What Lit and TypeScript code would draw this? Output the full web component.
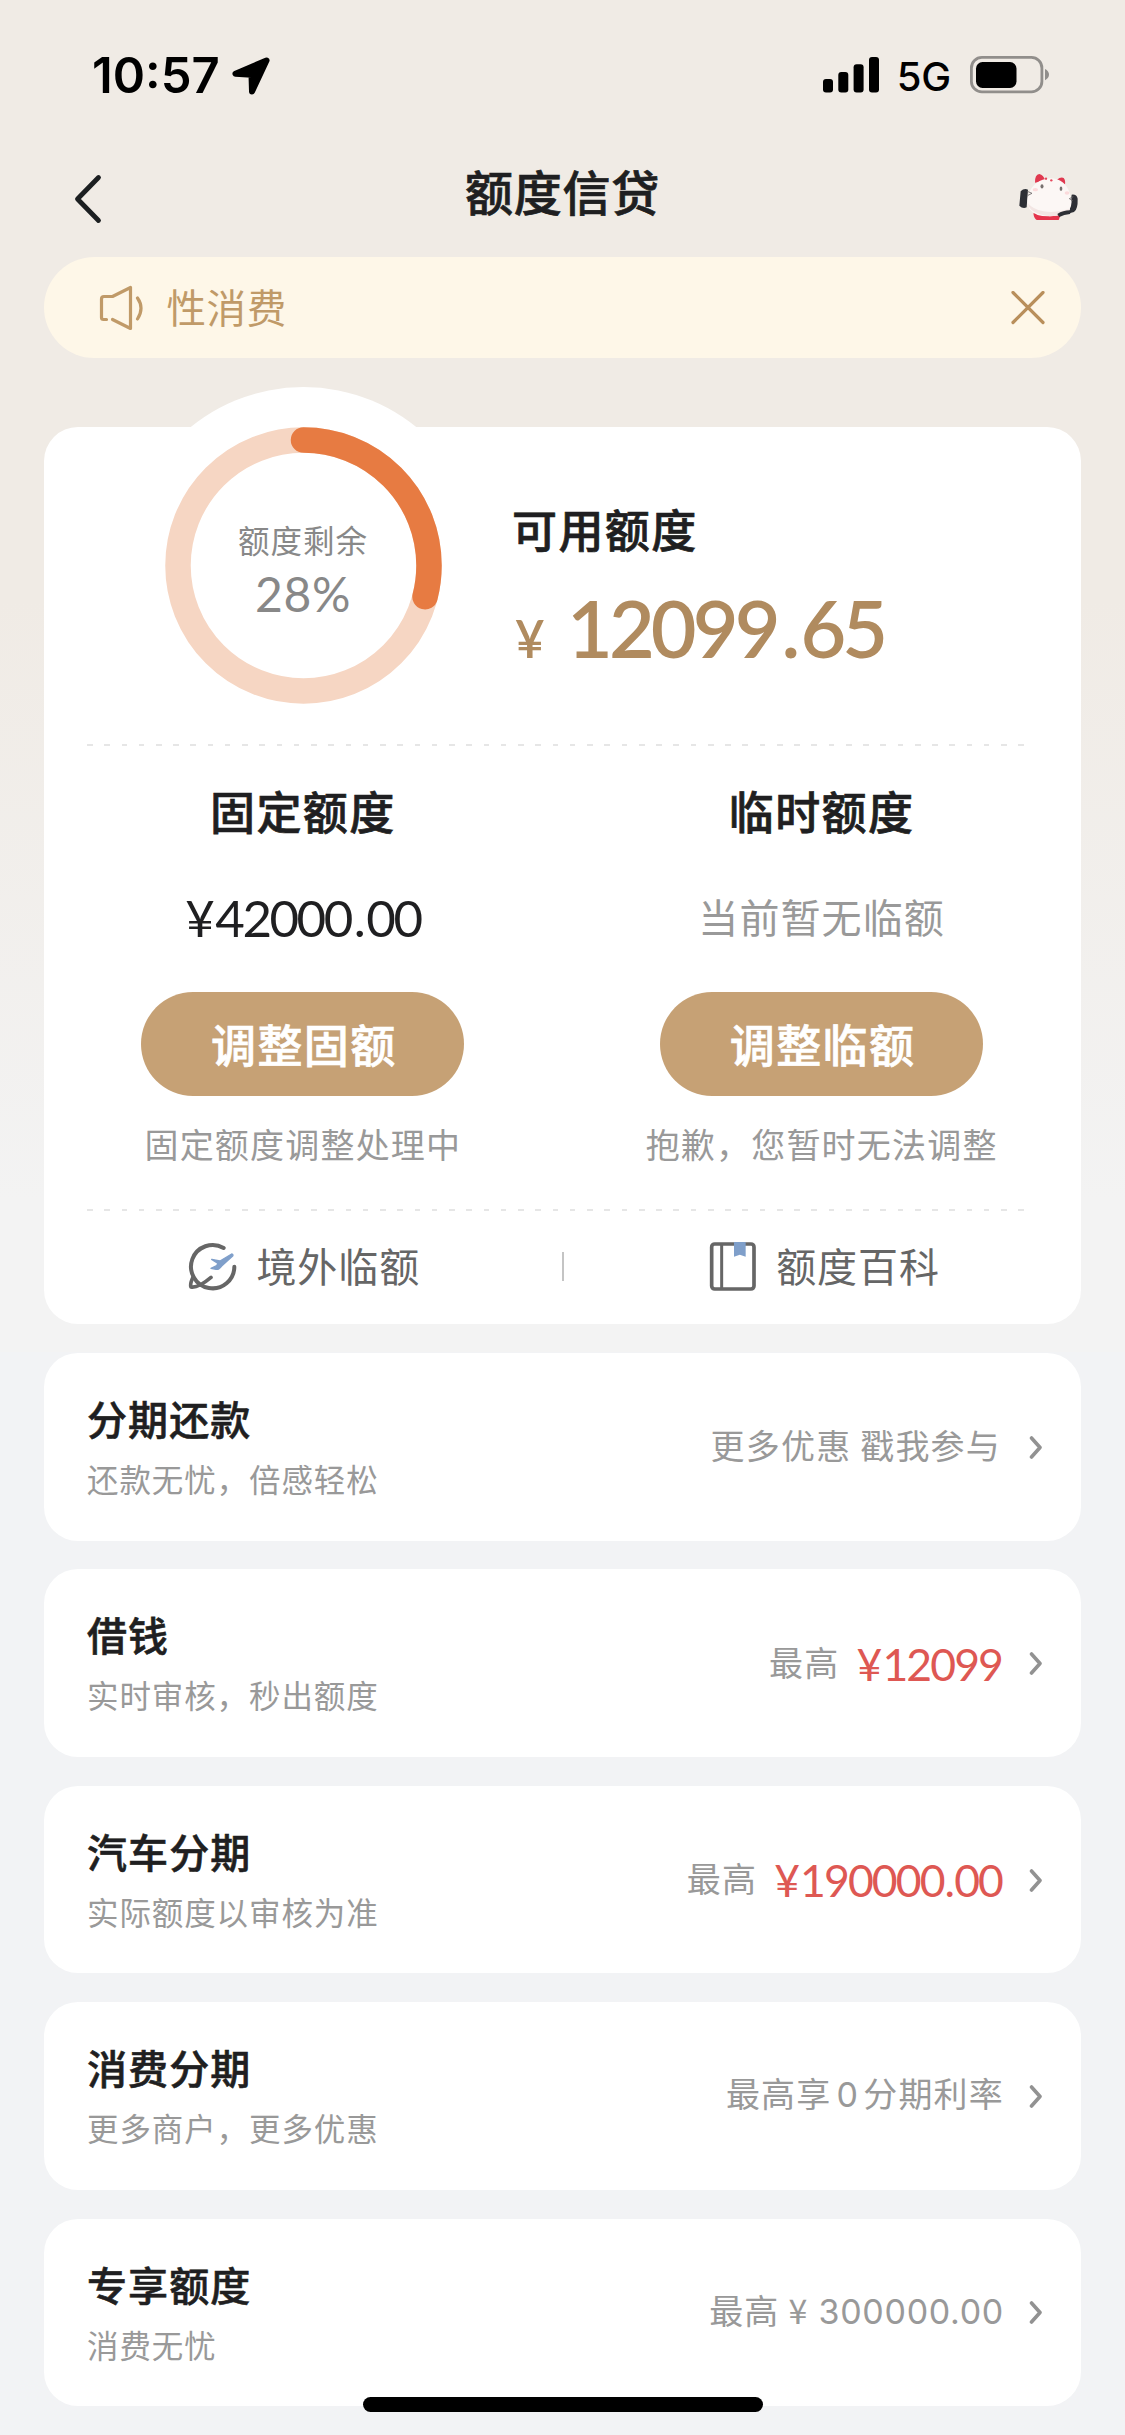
import { LitElement, html, css, nothing } from "lit";
import type { TemplateResult } from "lit";
import { customElement, property } from "lit/decorators.js";

interface Entry {
  title: string;
  sub: string;
  note: TemplateResult;
  amount?: string;
}

const ENTRIES: Entry[] = [
  { title: "分期还款", sub: "还款无忧，倍感轻松", note: html`<span class="shift">更多优惠 戳我参与</span>` },
  { title: "借钱", sub: "实时审核，秒出额度", note: html`最高`, amount: "¥12099" },
  { title: "汽车分期", sub: "实际额度以审核为准", note: html`最高`, amount: "¥190000.00" },
  { title: "消费分期", sub: "更多商户，更多优惠", note: html`最高享<span class="zero">0</span>分期利率` },
  { title: "专享额度", sub: "消费无忧", note: html`最高<span class="cny">¥</span> <span class="wide">300000.00</span>` },
];

// Gives the yen sign and the decimal point their own elements so they can be spaced more openly than the digits.
const money = (value: string) => {
  const sign = value.startsWith("¥");
  const [whole, cents] = (sign ? value.slice(1) : value).split(".");
  return html`${sign ? html`<span class="sign">¥</span>` : nothing}${whole}${cents === undefined ? nothing : html`<span class="dot">.</span>${cents}`}`;
};

@customElement("status-bar")
class StatusBar extends LitElement {
  static styles = css`
    :host {
      display: flex;
      justify-content: space-between;
      align-items: center;
      height: 149px;
      padding: 0 75px 0 92px;
      box-sizing: border-box;
      color: #000;
      font-family: Inter, "Liberation Sans", sans-serif;
    }
    .left,
    .right {
      display: flex;
      align-items: center;
    }
    .time {
      font-size: 49px;
      font-weight: 600;
      line-height: 60px;
      letter-spacing: 0;
      margin-top: 2px;
    }
    .arrow {
      margin: 2px 0 0 12px;
    }
    .net {
      font-size: 40px;
      font-weight: 500;
      line-height: 60px;
      margin: 4px 19px 0 17px;
      letter-spacing: -0.2px;
    }
    svg {
      display: block;
    }
  `;
  render() {
    return html`
      <div class="left">
        <span class="time">10:57</span>
        <svg class="arrow" width="38" height="38" viewBox="0 0 38 38">
          <path d="M34.500 3.500L3.500 16.800L19.500 17.800L20 34.500Z" stroke="#000" stroke-width="6" stroke-linejoin="round" />
        </svg>
      </div>
      <div class="right">
        <svg width="57" height="36" viewBox="0 0 57 36">
          <rect x="0" y="22" width="10" height="13.500" rx="3" />
          <rect x="15.300" y="15" width="10" height="20.500" rx="3" />
          <rect x="30.600" y="7.300" width="10" height="28.200" rx="3" />
          <rect x="46" y="0" width="10" height="35.500" rx="3" />
        </svg>
        <span class="net">5G</span>
        <svg width="80" height="38" viewBox="0 0 80 38">
          <rect x="1.400" y="1.400" width="70.500" height="34.500" rx="10.500" fill="none" stroke="#918e8b" stroke-width="2.800" />
          <rect x="6" y="6" width="40.500" height="26" rx="6.500" />
          <path d="M75 13q4 2 4 5.600t-4 5.600z" fill="#918e8b" />
        </svg>
      </div>
    `;
  }
}

@customElement("nav-bar")
class NavBar extends LitElement {
  static styles = css`
    :host {
      display: grid;
      grid-template-columns: 125px 1fr 125px;
      height: 108px;
      color: #1f1f21;
    }
    .back {
      margin: 24px 0 0 73px;
    }
    .title {
      text-align: center;
      font-size: 48px;
      font-weight: 500;
      -webkit-text-stroke: 0.7px currentColor;
      letter-spacing: 0.8px;
      line-height: 70px;
      margin-top: 6px;
    }
    .mascot {
      margin-top: 1px;
    }
    svg {
      display: block;
    }
  `;
  render() {
    return html`
      <svg class="back" width="32" height="52" viewBox="0 0 32 52">
        <path d="M25.500 4.500L4.500 26L25.500 47.500" fill="none" stroke="#1c1f21" stroke-width="4.800" stroke-linecap="round" stroke-linejoin="round" />
      </svg>
      <div class="title">额度信贷</div>
      <svg class="mascot" width="100" height="90" viewBox="0 0 300 270">
        <path d="M105 98Q104 74 118 72Q130 74 136 92Z M170 90Q182 80 191 84Q197 90 195 104Z" fill="#e0384f" />
        <path d="M62 124Q72 114 84 119L80 172Q68 177 58 167Z M215 134Q230 132 233 146Q234 178 222 186L208 190Z" fill="#2d2f35" />
        <path d="M100 190H184L176 210H110Q102 206 100 190Z" fill="#e5344c" />
        <path d="M88 128Q102 90 150 85Q196 86 209 130Q221 158 208 180Q190 197 150 199Q104 200 88 177Q76 154 88 128Z" fill="#fcf7f5" />
        <path d="M84 160Q88 192 150 199Q192 198 210 176Q170 190 130 184Q98 178 84 160Z" fill="#f3e6e4" />
        <path d="M172 192Q190 180 214 181L210 192Q192 194 178 201Z" fill="#2d2f35" />
        <circle cx="138" cy="86" r="3.500" fill="#e5485c" />
        <circle cx="154" cy="91" r="3.500" fill="#e5485c" />
        <ellipse cx="126" cy="109" rx="4.500" ry="6.500" fill="#77716f" />
        <ellipse cx="183" cy="116" rx="4" ry="6.500" fill="#77716f" />
        <ellipse cx="106" cy="119" rx="8" ry="5" fill="#fbdadb" />
        <ellipse cx="201" cy="129" rx="7" ry="5" fill="#fbdadb" />
        <path d="M82 124L96 130L84 136M220 140L208 146L218 152" fill="none" stroke="#6a6667" stroke-width="2.500" />
      </svg>
    `;
  }
}

@customElement("notice-bar")
class NoticeBar extends LitElement {
  static styles = css`
    :host {
      display: flex;
      align-items: center;
      height: 101px;
      margin: 0 44px 0 43.5px;
      padding: 0 36px 0 55px;
      box-sizing: border-box;
      border-radius: 51px;
      background: #fef7e8;
      color: #c09a68;
    }
    .run {
      flex: 1;
      margin: -3px 0 0 22px;
      font-size: 39.5px;
      letter-spacing: 0.6px;
      line-height: 62px;
      white-space: nowrap;
    }
  `;
  render() {
    return html`
      <svg width="46" height="46" viewBox="0 0 46 46" fill="none" stroke="currentColor" stroke-width="3.200" stroke-linecap="round" stroke-linejoin="round">
        <path d="M7.500 34.500H4.500Q2.500 34.500 2.500 32.500V14Q2.500 11.500 5 11.500H13.500L31.500 2.500V43.500L13.500 34.500" />
        <path d="M38.500 13Q45.500 23 38.500 34" />
      </svg>
      <span class="run">性消费</span>
      <svg width="34" height="34" viewBox="0 0 34 34" fill="none" stroke="#b98f5b" stroke-width="3.200" stroke-linecap="round">
        <path d="M2 1.500L32 31.500M32 1.500L2 31.500" />
      </svg>
    `;
  }
}

@customElement("quota-ring")
class QuotaRing extends LitElement {
  static styles = css`
    :host {
      position: relative;
      display: grid;
      place-items: center;
      width: 277px;
      height: 277px;
    }
    .halo {
      position: absolute;
      inset: -40px;
      border-radius: 50%;
      background: #fff;
    }
    .ring {
      position: absolute;
      inset: 0;
    }
    .label {
      position: relative;
      text-align: center;
      color: #888;
      padding-top: 8px;
    }
    .name {
      font-size: 31.5px;
      letter-spacing: 1px;
      line-height: 46px;
    }
    .pct {
      font-family: Lato, sans-serif;
      font-size: 48px;
      letter-spacing: 0.6px;
      line-height: 60px;
      margin-top: 2px;
    }
  `;
  @property({ type: Number }) ratio = 0.29;
  render() {
    const r = 125.5;
    const len = 2 * Math.PI * r;
    return html`
      <div class="halo"></div>
      <svg class="ring" width="277" height="277" viewBox="0 0 277 277" fill="none" stroke-width="25.500">
        <circle cx="138.500" cy="138.500" r=${r} stroke="#f6d6c3" />
        <circle cx="138.500" cy="138.500" r=${r} stroke="#e77b42" stroke-linecap="round"
          stroke-dasharray="${len * this.ratio} ${len}" transform="rotate(-90 138.500 138.500)" />
      </svg>
      <div class="label">
        <div class="name">额度剩余</div>
        <div class="pct">28%</div>
      </div>
    `;
  }
}

@customElement("quota-card")
class QuotaCard extends LitElement {
  static styles = css`
    :host {
      display: block;
      margin: 69px 44px 0 43.5px;
      height: 897px;
      border-radius: 34px;
      background: #fff;
      color: #1f1f21;
    }
    .top {
      display: flex;
      height: 317px;
      padding-left: 121px;
    }
    .avail {
      padding: 72px 0 0 70.5px;
    }
    .h {
      font-size: 45px;
      font-weight: 500;
      -webkit-text-stroke: 0.7px currentColor;
      letter-spacing: 1.4px;
      line-height: 60px;
    }
    .big {
      display: flex;
      align-items: baseline;
      margin-top: 29px;
      line-height: 80px;
      color: #b08b5f;
      font-family: Lato, sans-serif;
    }
    .yen {
      font-size: 51px;
      font-weight: 600;
      width: 55px;
      padding-left: 3px;
      box-sizing: border-box;
    }
    .num {
      font-size: 79px;
      font-weight: 600;
      letter-spacing: -3.9px;
    }
    .num .dot {
      margin: 0 4px 0 5px;
    }
    .dash {
      height: 2px;
      width: 944px;
      margin-left: 43px;
      background: repeating-linear-gradient(90deg, #e6e6e6 0 5.500px, transparent 5.500px 17.250px);
    }
    .cols {
      display: grid;
      grid-template-columns: 1fr 1fr;
      height: 463px;
    }
    .col {
      display: flex;
      flex-direction: column;
      align-items: center;
      padding-top: 35px;
      white-space: nowrap;
    }
    .value {
      margin-top: 46px;
      height: 60px;
      line-height: 60px;
    }
    .money {
      font-family: Lato, sans-serif;
      font-size: 51px;
      letter-spacing: -2.5px;
      line-height: 62px;
    }
    .money .sign {
      margin-right: 3px;
    }
    .money .dot {
      margin: 0 3px;
    }
    .none {
      font-size: 40px;
      letter-spacing: 1.100px;
      color: #999;
      line-height: 58px;
    }
    .btn {
      margin-top: 45px;
      width: 323px;
      height: 104px;
      padding-left: 2px;
      box-sizing: border-box;
      border-radius: 52px;
      background: #c6a175;
      color: #fff;
      text-align: center;
      line-height: 103px;
      font-size: 45px;
      font-weight: 500;
      -webkit-text-stroke: 0.7px currentColor;
      letter-spacing: 1.400px;
    }
    .hint {
      margin-top: 23px;
      font-size: 34px;
      letter-spacing: 1.200px;
      line-height: 50px;
      color: #999;
    }
    .links {
      display: flex;
      align-items: center;
      height: 113px;
      font-size: 40px;
      letter-spacing: 1px;
      line-height: 58px;
      color: #666;
    }
    .link {
      flex: 1;
      display: flex;
      align-items: center;
      justify-content: center;
      padding-left: 4px;
    }
    .link svg {
      margin: 0 19px 2px 0;
    }
    .link span {
      margin-top: -5px;
    }
    .sep {
      width: 2px;
      height: 29px;
      margin: 0 -1px 2px 1px;
      background: #c4c4c4;
    }
  `;
  render() {
    return html`
      <div class="top">
        <quota-ring></quota-ring>
        <div class="avail">
          <div class="h">可用额度</div>
          <div class="big"><span class="yen">¥</span><span class="num">${money("12099.65")}</span></div>
        </div>
      </div>
      <div class="dash"></div>
      <div class="cols">
        <div class="col">
          <div class="h">固定额度</div>
          <div class="value money">${money("¥42000.00")}</div>
          <div class="btn">调整固额</div>
          <div class="hint">固定额度调整处理中</div>
        </div>
        <div class="col">
          <div class="h">临时额度</div>
          <div class="value none">当前暂无临额</div>
          <div class="btn">调整临额</div>
          <div class="hint">抱歉，您暂时无法调整</div>
        </div>
      </div>
      <div class="dash"></div>
      <div class="links">
        <div class="link">
          <svg width="49" height="49" viewBox="0 0 147 147" fill="none" stroke="#666" stroke-width="12" stroke-linecap="round" stroke-linejoin="round">
            <path d="M107 18A65 65 0 1 0 139 74" stroke-dasharray="none" />
            <path d="M16 104Q5 126 9 135Q30 139 69 106" stroke-width="11" />
            <path d="M71 52L96 57L131 36Q137 38 134 42L101 72Q92 84 84 82L69 79L86 71L90 64Z" stroke="#7f9fca" stroke-width="4" fill="#7f9fca" />
          </svg>
          <span>境外临额</span>
        </div>
        <div class="sep"></div>
        <div class="link">
          <svg width="49" height="49" viewBox="0 0 147 147" fill="none" stroke="#666" stroke-width="11">
            <rect x="11" y="6" width="127" height="135" rx="9" />
            <path d="M41 6V141" stroke-width="9" />
            <path d="M78 0H113V44L95.500 38L78 44Z" fill="#7f9fca" stroke="none" />
          </svg>
          <span>额度百科</span>
        </div>
      </div>
    `;
  }
}

@customElement("entry-card")
class EntryCard extends LitElement {
  static styles = css`
    :host {
      display: flex;
      justify-content: space-between;
      height: 187.5px;
      padding: 0 38px 0 43.5px;
      box-sizing: border-box;
      border-radius: 34px;
      background: #fff;
      color: #1f1f21;
      white-space: nowrap;
    }
    .text {
      padding-top: 36px;
    }
    .title {
      font-size: 40px;
      font-weight: 500;
      -webkit-text-stroke: 0.6px currentColor;
      letter-spacing: 1.100px;
      line-height: 58px;
    }
    .sub {
      margin-top: 8px;
      font-size: 31.500px;
      letter-spacing: 0.900px;
      line-height: 46px;
      color: #999;
    }
    .side {
      display: flex;
      align-items: center;
      color: #999;
    }
    .note {
      font-size: 34px;
      letter-spacing: 1.200px;
      line-height: 50px;
      margin-top: -3px;
    }
    .shift {
      margin-right: 3px;
    }
    .zero {
      margin: 0 4px 0 5px;
      font-family: Inter, sans-serif;
    }
    .cny {
      margin: 0 1px 0 9px;
    }
    .wide {
      font-family: Inter, sans-serif;
      letter-spacing: 0.700px;
    }
    .amount {
      margin: 1px 2px 0 17px;
      font-family: Lato, sans-serif;
      font-size: 44.500px;
      line-height: 56px;
      letter-spacing: -1.900px;
      color: #de5853;
    }
    .amount .sign {
      margin-right: 2px;
    }
    .amount .dot {
      margin: 0 1px;
    }
    .go {
      margin-left: 25px;
    }
  `;
  @property({ attribute: false }) entry!: Entry;
  render() {
    const e = this.entry;
    return html`
      <div class="text">
        <div class="title">${e.title}</div>
        <div class="sub">${e.sub}</div>
      </div>
      <div class="side">
        <span class="note">${e.note}</span>
        ${e.amount ? html`<span class="amount">${money(e.amount)}</span>` : nothing}
        <svg class="go" width="14" height="24" viewBox="0 0 14 24">
          <path d="M2.500 3L11 12.500L2.500 22" fill="none" stroke="#929292" stroke-width="3.600" stroke-linecap="round" stroke-linejoin="round" />
        </svg>
      </div>
    `;
  }
}

@customElement("app-root")
class AppRoot extends LitElement {
  static styles = css`
    :host {
      display: block;
      position: relative;
      width: 1125px;
      height: 2435px;
      overflow: hidden;
      background: linear-gradient(#f0ebe5 0, #f0ebe5 600px, #f3f3f3 1200px, #f3f3f3 1352px, #f2f3f5 1352px);
      font-family: "Noto Sans CJK SC", sans-serif;
    }
    .list {
      display: flex;
      flex-direction: column;
      gap: 28.900px;
      margin: 29px 44px 0 43.500px;
    }
    .home {
      position: absolute;
      left: 363px;
      bottom: 23px;
      width: 400px;
      height: 15px;
      border-radius: 8px;
      background: #000;
    }
  `;
  render() {
    return html`
      <status-bar></status-bar>
      <nav-bar></nav-bar>
      <notice-bar></notice-bar>
      <quota-card></quota-card>
      <div class="list">
        ${ENTRIES.map((e) => html`<entry-card .entry=${e}></entry-card>`)}
      </div>
      <div class="home"></div>
    `;
  }
}
